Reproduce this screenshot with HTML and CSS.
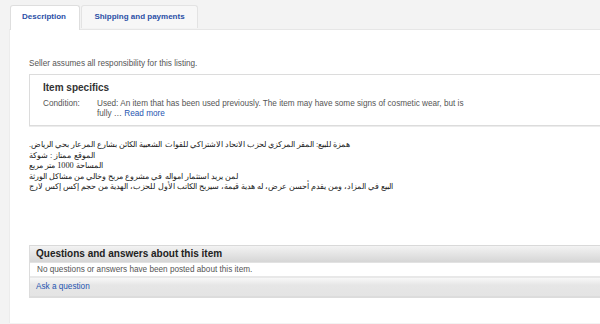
FILE: index.html
```html
<!DOCTYPE html>
<html lang="en">
<head>
<meta charset="utf-8">
<title>Item description</title>
<link rel="stylesheet" href="styles.css">
</head>
<body>
<div class="page">
  <div class="tabs">
    <div class="tab active">Description</div>
    <div class="tab">Shipping and payments</div>
  </div>
  <div class="panel">
    <p class="seller">Seller assumes all responsibility for this listing.</p>
    <div class="specifics">
      <h2 class="spec-title">Item specifics</h2>
      <div class="spec-row">
        <div class="spec-label">Condition:</div>
        <div class="spec-value">Used: An item that has been used previously. The item may have some signs of cosmetic wear, but is fully &hellip; <a class="link" href="#">Read more</a></div>
      </div>
    </div>
    <div class="desc" dir="rtl" lang="ar">
      <div>همزة للبيع: المقر المركزي لحزب الاتحاد الاشتراكي للقوات الشعبية الكائن بشارع المرعار بحي الرياض.</div>
      <div>الموقع ممتاز : شوكة</div>
      <div>المساحة 1000 متر مربع</div>
      <div>لمن يريد استثمار امواله في مشروع مربح وخالي من مشاكل الورثة</div>
      <div>البيع في المزاد، ومن يقدم أحسن عرض، له هدية قيمة، سيربح الكاتب الأول للحزب، الهدية من حجم إكس إكس لارج</div>
    </div>
    <div class="qa">
      <h2 class="qa-head">Questions and answers about this item</h2>
      <div class="qa-row">No questions or answers have been posted about this item.</div>
      <div class="qa-ask"><a class="link" href="#">Ask a question</a></div>
    </div>
  </div>
</div>
</body>
</html>
```
FILE: styles.css
```css
html, body {
  margin: 0;
  padding: 0;
}
body {
  background: #f3f3f3;
  font-family: "Liberation Sans", Arial, sans-serif;
  overflow: hidden;
  width: 600px;
  height: 324px;
}
.page {
  width: 640px;
}
.tabs {
  display: flex;
  align-items: flex-end;
  gap: 1px;
  padding: 5px 0 0 10px;
  height: 24px;
  position: relative;
  z-index: 1;
}
.tab {
  box-sizing: border-box;
  height: 24px;
  padding: 0 11px;
  border: 1px solid #dedede;
  border-bottom: none;
  border-radius: 3px 3px 0 0;
  background: #f7f7f7;
  color: #2b4fa6;
  font-weight: bold;
  font-size: 8px;
  line-height: 22px;
}
.tab:nth-child(2) {
  height: 23px;
  margin-bottom: 1px;
  border-color: #e3e3e3;
  width: 117px;
  text-align: center;
  padding: 0;
}
.tab.active {
  background: #fff;
  height: 25px;
  margin-bottom: -1px;
  width: 70px;
}
.panel {
  background: #fff;
  border-top: 1px solid #e6e6e6;
  border-left: 1px solid #ececec;
  margin-left: 9px;
  padding: 0 0 40px 19px;
  height: 294px;
  box-sizing: border-box;
}
.seller {
  margin: 0;
  padding-top: 29px;
  font-size: 8.2px;
  line-height: 10px;
  color: #555;
}
.specifics {
  margin-top: 5px;
  border: 1px solid #dcdcdc;
  box-shadow: 0 1px 0 #ececec;
  padding: 7px 13px;
  box-sizing: border-box;
  height: 52px;
}
.spec-title {
  margin: 0;
  font-size: 10px;
  line-height: 12px;
  color: #333;
  font-weight: bold;
}
.spec-row {
  display: flex;
  margin-top: 5px;
  font-size: 8.2px;
  line-height: 10px;
  color: #555;
}
.spec-label {
  width: 54px;
  flex: none;
}
.spec-value {
  width: 372px;
}
.link {
  color: #2655b0;
  text-decoration: none;
}
.desc {
  margin-top: 14px;
  text-align: left;
  font-family: "Liberation Serif", "DejaVu Serif", serif;
  font-size: 8.3px;
  line-height: 10.6px;
  color: #222;
  width: 560px;
}
.qa {
  margin-top: 52px;
  width: 600px;
  border-left: 1px solid #dcdcdc;
}
.qa-head {
  margin: 0;
  height: 18px;
  box-sizing: border-box;
  border-top: 1px solid #d9d9d9;
  border-bottom: 1px solid #e2e2e2;
  background: linear-gradient(#f3f3f3, #d6d6d6);
  padding-left: 6px;
  font-size: 10px;
  line-height: 16px;
  color: #222;
  font-weight: bold;
}
.qa-row {
  height: 15px;
  box-sizing: border-box;
  border-bottom: 2px solid #e8e8e8;
  padding-left: 7px;
  font-size: 8.2px;
  line-height: 13px;
  color: #555;
}
.qa-ask {
  height: 20px;
  box-sizing: border-box;
  border-bottom: 2px solid #dcdcdc;
  background: linear-gradient(#f8f8f8, #e6e6e6 40%, #e4e4e4);
  padding-left: 6px;
  font-size: 8.2px;
  line-height: 18px;
}
```
